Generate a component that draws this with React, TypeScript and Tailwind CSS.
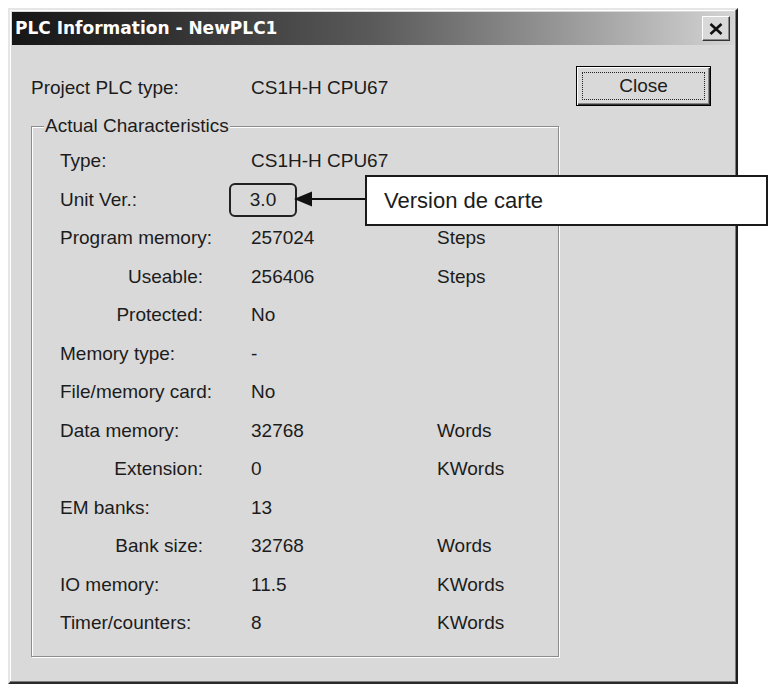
import React from "react"

type Row = {
  label: string
  value?: string
  unit?: string
  indent?: boolean
  boxed?: boolean
}

const rows: Row[] = [
  { label: "Type:", value: "CS1H-H CPU67" },
  { label: "Unit Ver.:", value: "3.0", boxed: true },
  { label: "Program memory:", value: "257024", unit: "Steps" },
  { label: "Useable:", value: "256406", unit: "Steps", indent: true },
  { label: "Protected:", value: "No", indent: true },
  { label: "Memory type:", value: "-" },
  { label: "File/memory card:", value: "No" },
  { label: "Data memory:", value: "32768", unit: "Words" },
  { label: "Extension:", value: "0", unit: "KWords", indent: true },
  { label: "EM banks:", value: "13" },
  { label: "Bank size:", value: "32768", unit: "Words", indent: true },
  { label: "IO memory:", value: "11.5", unit: "KWords" },
  { label: "Timer/counters:", value: "8", unit: "KWords" },
]

function CloseX() {
  return (
    <svg width="14" height="12" viewBox="0 0 14 12">
      <path d="M1.5 1 L12.5 11 M12.5 1 L1.5 11" stroke="#111" strokeWidth="2.6" />
    </svg>
  )
}

export default function App() {
  return (
    <div
      className="relative w-[779px] h-[684px] bg-white pt-[8px] pl-[8px] overflow-hidden text-[#1c1c1c]"
      style={{ fontFamily: '"Liberation Sans", Arial, sans-serif' }}
    >
      {/* dialog window */}
      <div className="w-[730px] h-[676px] bg-[#d9d9d9] border-2 border-t-[#e6e6e6] border-l-[#e6e6e6] border-r-[#1e1e1e] border-b-[#2a2a2a] shadow-[inset_-1px_-1px_0_#7c7c7c,inset_1px_1px_0_#fff] p-[2px] flex flex-col">
        {/* title bar */}
        <div className="h-[33px] flex items-center justify-between bg-gradient-to-r from-[#161616] via-[#5a5a5a] to-[#d4d4d4] pl-[3px] pr-[4px]">
          <span
            className="text-white font-bold text-[17px] leading-none"
            style={{ fontFamily: '"DejaVu Sans", Verdana, sans-serif' }}
          >
            PLC Information - NewPLC1
          </span>
          <div className="w-[28px] h-[25px] flex items-center justify-center bg-[#d9d9d9] border border-t-white border-l-white border-r-[#333] border-b-[#333] shadow-[inset_-1px_-1px_0_#888]">
            <CloseX />
          </div>
        </div>

        {/* body */}
        <div className="flex-1 flex text-[19px] leading-[22px]">
          <div className="pl-[19px] pt-[24px]">
            <div className="h-[38px] flex items-center">
              <span className="w-[220px]">Project PLC type:</span>
              <span>CS1H-H CPU67</span>
            </div>

            <fieldset className="w-[528px] mt-[8px] border border-[#8c8c8c] shadow-[inset_1px_1px_0_#fff,1px_1px_0_#fff] pb-[13px] pt-[5px]">
              <legend className="ml-[12px] px-[1px] bg-[#d9d9d9]">Actual Characteristics</legend>
              {rows.map((r) => (
                <div key={r.label} className="h-[38.5px] flex items-center">
                  <span
                    className={
                      r.indent
                        ? "w-[219px] pl-[28px] pr-[48px] text-right"
                        : "w-[219px] pl-[28px]"
                    }
                  >
                    {r.label}
                  </span>
                  <span className="w-[186px]">
                    {r.boxed ? (
                      <span className="ml-[-22px] w-[68px] h-[34px] inline-flex items-center justify-center border-2 border-[#222] rounded-[6px]">
                        {r.value}
                      </span>
                    ) : (
                      r.value
                    )}
                  </span>
                  <span>{r.unit}</span>
                </div>
              ))}
            </fieldset>
          </div>

          <div className="pl-[17px] pt-[21px]">
            <div className="w-[135px] h-[40px] border border-black bg-[#d9d9d9] shadow-[inset_1px_1px_0_#fff,inset_-1px_-1px_0_#333,inset_-2px_-2px_0_#888] p-[5px]">
              <div className="w-full h-full border border-dotted border-[#222] flex items-center justify-center">
                Close
              </div>
            </div>
          </div>
        </div>
      </div>

      {/* callout annotation */}
      <svg className="absolute left-[294px] top-[190px]" width="71" height="18" viewBox="0 0 71 18">
        <polygon points="0,9 18,1.5 18,16.5" fill="#111" />
        <line x1="16" y1="9" x2="71" y2="9" stroke="#111" strokeWidth="2" />
      </svg>
      <div className="absolute left-[365px] top-[175px] w-[403px] h-[51px] bg-white border-2 border-[#1a1a1a] flex items-center pl-[17px] text-[22px] text-[#1c1c1c]">
        Version de carte
      </div>
    </div>
  )
}
